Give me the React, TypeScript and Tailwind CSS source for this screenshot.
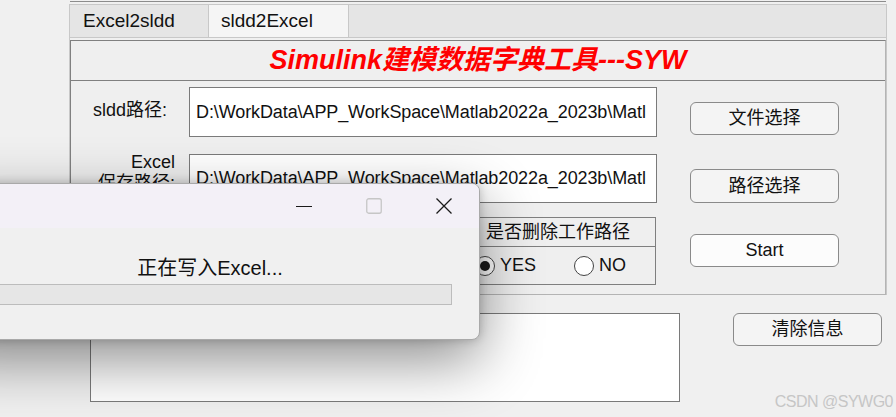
import React from 'react';

const PATH = 'D:\\WorkData\\APP_WorkSpace\\Matlab2022a_2023b\\Matl';

function Btn({ label, className = '' }: { label: string; className?: string }) {
  return (
    <div
      className={`w-[149px] h-[33px] shrink-0 rounded-[6px] border border-[#8a8a8a] bg-[#f4f4f4] flex items-center justify-center text-[18px] text-[#111] ${className}`}
    >
      {label}
    </div>
  );
}

function Field({ value, h }: { value: string; h: string }) {
  return (
    <div className={`w-[468px] ${h} shrink-0 bg-white border border-[#7a7a7a] flex items-center pl-[6px] overflow-hidden whitespace-nowrap text-[18px] tracking-[-0.1px] text-[#111]`}>
      {value}
    </div>
  );
}

function Radio({ label, checked }: { label: string; checked?: boolean }) {
  return (
    <div className="flex items-center shrink-0 w-[99px]">
      <span className="w-[20px] h-[20px] shrink-0 rounded-full border border-[#444] bg-white flex items-center justify-center">
        {checked && <span className="w-[10px] h-[10px] rounded-full bg-[#1a1a1a]" />}
      </span>
      <span className="ml-[5px] text-[18px] text-[#111]">{label}</span>
    </div>
  );
}

export default function App() {
  return (
    <div className="relative w-[896px] h-[417px] overflow-hidden bg-[#f0f0f0] font-['Liberation_Sans','Noto_Sans_CJK_SC',sans-serif]">
      {/* line left from the container above */}
      <div className="ml-[70px] w-[816px] h-[2px] border-b border-[#8c8c8c]" />

      {/* tab group */}
      <div className="ml-[69px] mt-[2px] w-[818px] border-x border-[#c8c8c8]">
        <div className="h-[34px] flex bg-[#e5e5e5] border-y border-[#c8c8c8]">
          <div className="w-[139px] border-r border-[#c8c8c8] pl-[13px] flex items-center text-[19px] text-[#111]">
            Excel2sldd
          </div>
          <div className="w-[140px] bg-[#f5f5f5] border-r border-[#c8c8c8] pl-[12px] flex items-center text-[19px] text-[#111]">
            sldd2Excel
          </div>
        </div>

        {/* tab panel */}
        <div className="mt-[2px] w-[816px] h-[255px] border-l border-t border-[#808080] border-r border-b border-r-[#b4b4b4] border-b-[#b4b4b4] bg-[#efefef]">
          <div className="h-[40px] border-b border-[#808080] flex items-center justify-center">
            <span className="text-[27px] font-bold italic text-[#ff0000] leading-none">
              Simulink建模数据字典工具---SYW
            </span>
          </div>

          <div className="flex flex-col">
            {/* sldd path */}
            <div className="flex mt-[6px]">
              <div className="w-[96px] text-right text-[18px] text-[#111] self-center -mt-[4px]">sldd路径:</div>
              <div className="ml-[22px]">
                <Field value={PATH} h="h-[50px]" />
              </div>
              <Btn label="文件选择" className="ml-[33px] mt-[15px]" />
            </div>

            {/* excel save path */}
            <div className="flex mt-[17px]">
              <div className="w-[104px] text-right text-[18px] leading-[21px] text-[#111] -mt-[2px]">
                Excel
                <br />
                保存路径:
              </div>
              <div className="ml-[14px]">
                <Field value={PATH} h="h-[49px]" />
              </div>
              <Btn label="路径选择" className="ml-[33px] mt-[15px] h-[34px]" />
            </div>

            {/* delete work path group + start */}
            <div className="flex mt-[14px]">
              <div className="ml-[397px] w-[188px] h-[68px] border border-[#7f7f7f] flex flex-col">
                <div className="h-[29px] border-b border-[#7f7f7f] pl-[17px] flex items-center text-[18px] text-[#111]">
                  是否删除工作路径
                </div>
                <div className="flex-1 flex items-center pl-[6px]">
                  <Radio label="YES" checked />
                  <Radio label="NO" />
                </div>
              </div>
              <Btn label="Start" className="ml-[34px] mt-[17px] bg-[#fcfcfc] border-[#5a5a5a]" />
            </div>
          </div>
        </div>
      </div>

      {/* message area */}
      <div className="flex mt-[18px]">
        <div className="ml-[90px] w-[590px] h-[89px] bg-white border border-[#7a7a7a]" />
        <Btn label="清除信息" className="ml-[53px]" />
      </div>

      {/* watermark */}
      <div className="absolute right-[3px] bottom-[3px] text-[16px] tracking-[-0.5px] text-[#c6c6c6] font-['Liberation_Sans_Narrow','Liberation_Sans',sans-serif]">
        CSDN @SYWG0
      </div>

      {/* progress dialog window */}
      <div className="absolute left-[-60px] top-[183px] w-[540px] h-[157px] rounded-[8px] overflow-hidden border border-[#a9a9a9] bg-[#f0f0f0] shadow-[0_20px_60px_rgba(0,0,0,0.45),0_0_10px_rgba(0,0,0,0.2)] flex flex-col">
        <div className="h-[44px] bg-[#f3f0f7] flex justify-end">
          <div className="w-[70px] flex items-center justify-center">
            <svg width="16" height="16" viewBox="0 0 16 16">
              <path d="M0 8.5h16" stroke="#1a1a1a" strokeWidth="1.2" />
            </svg>
          </div>
          <div className="w-[70px] flex items-center justify-center">
            <svg width="16" height="16" viewBox="0 0 16 16">
              <rect x="0.75" y="0.75" width="14.5" height="14.5" rx="2" fill="none" stroke="#c6c6c6" strokeWidth="1.3" />
            </svg>
          </div>
          <div className="w-[70px] flex items-center justify-center">
            <svg width="16" height="16" viewBox="0 0 16 16">
              <path d="M0.5 0.5L15.5 15.5M15.5 0.5L0.5 15.5" stroke="#1a1a1a" strokeWidth="1.3" />
            </svg>
          </div>
        </div>
        <div className="mt-[28px] h-[25px] text-center text-[20px] leading-[25px] text-[#111]">正在写入Excel...</div>
        <div className="mt-[3px] mx-[27px] h-[21px] bg-[#e6e6e6] border border-[#bcbcbc]" />
      </div>
    </div>
  );
}
